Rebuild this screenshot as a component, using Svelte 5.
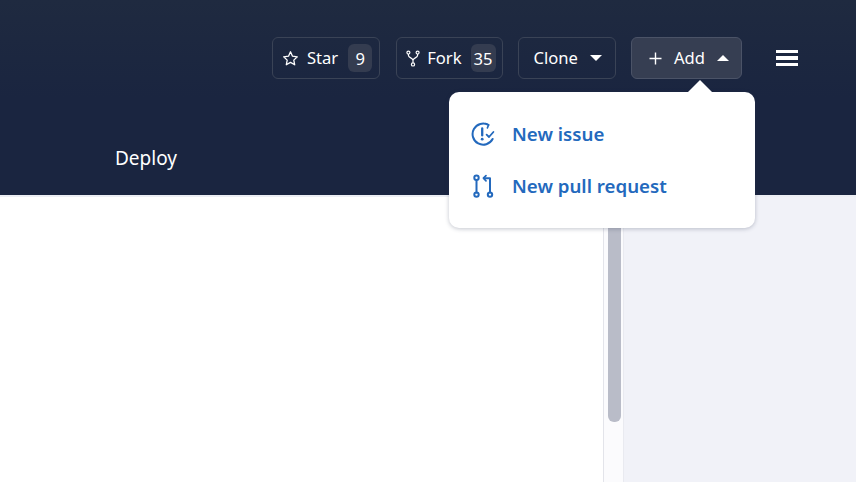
<script>
  const items = [
    { label: 'New issue', icon: 'issue' },
    { label: 'New pull request', icon: 'pull' }
  ];
</script>

<div class="page">
  <header class="top">
    <div class="toolbar">
      <button class="btn star">
        <svg class="ico" width="17" height="17" viewBox="0 0 17 17" fill="none" stroke="currentColor" stroke-width="1.3" stroke-linejoin="round">
          <path d="M8.5 1.8l2 4.4 4.8.6-3.5 3.3.9 4.7-4.2-2.4-4.2 2.4.9-4.7-3.5-3.3 4.8-.6z" />
        </svg>
        <span class="label">Star</span>
        <span class="count">9</span>
      </button>
      <button class="btn fork">
        <svg class="ico" width="14" height="17" viewBox="0 0 14 17" fill="none" stroke="currentColor" stroke-width="1.2">
          <circle cx="2.4" cy="2.6" r="1.5" />
          <circle cx="11.6" cy="2.6" r="1.5" />
          <circle cx="7" cy="14.4" r="1.6" />
          <path d="M2.4 4.1v1.2c0 2.8 4.6 2.4 4.6 5.2v2.3M11.6 4.1v1.2c0 2.8-4.6 2.4-4.6 5.2" />
        </svg>
        <span class="label">Fork</span>
        <span class="count">35</span>
      </button>
      <button class="btn clone">
        <span class="label">Clone</span>
        <span class="caret down"></span>
      </button>
      <button class="btn add">
        <svg width="13" height="13" viewBox="0 0 13 13" stroke="currentColor" stroke-width="1.4">
          <path d="M6.5 0.5v12M0.5 6.5h12" />
        </svg>
        <span class="label">Add</span>
        <span class="caret up"></span>
      </button>
      <div class="burger"><i></i><i></i><i></i></div>
    </div>
    <nav class="tabs"><span>Deploy</span></nav>

    <div class="menu">
      <span class="arrow"></span>
      {#each items as item}
        <div class="item">
          {#if item.icon === 'issue'}
            <svg width="24" height="24" viewBox="0 0 24 24" fill="none" stroke="currentColor" stroke-width="2" stroke-linecap="round" stroke-linejoin="round">
              <path d="M17.4 2.9A10.6 10.6 0 1 0 21.6 17" />
              <path d="M14.6 1.6l3 1.3-1.2 3" stroke-width="1.6" />
              <path d="M11.2 6.4v7" stroke-width="2.3" />
              <circle cx="11.2" cy="17.2" r="1.4" fill="currentColor" stroke="none" />
              <path d="M15.6 12.6l2.4 2.4 4.4-5" stroke-width="1.8" />
            </svg>
          {:else}
            <svg width="24" height="24" viewBox="0 0 24 24" fill="none" stroke="currentColor" stroke-width="2" stroke-linecap="round" stroke-linejoin="round">
              <circle cx="5.5" cy="3.8" r="2.2" />
              <circle cx="5.5" cy="20.6" r="2.2" />
              <circle cx="19" cy="20.6" r="2.2" />
              <path d="M5.5 6v12.4M19 18.4V4.2h-6" />
              <path d="M15 1.6l-2.6 2.6 2.6 2.6" stroke-width="1.7" />
            </svg>
          {/if}
          <span class="label">{item.label}</span>
        </div>
      {/each}
    </div>
  </header>

  <main class="body">
    <div class="content"></div>
    <div class="track"><div class="thumb"></div></div>
    <aside class="side"></aside>
  </main>
</div>

<style>
  :global(body) {
    margin: 0;
    overflow: hidden;
  }

  .page {
    width: 856px;
    height: 482px;
    display: flex;
    flex-direction: column;
    font-family: "Noto Sans", sans-serif;
    overflow: hidden;
  }

  .top {
    position: relative;
    height: 195px;
    flex: none;
    box-sizing: border-box;
    padding: 37px 58px 0 115px;
    background: linear-gradient(#1f2a40, #1a2540 50%);
    color: #fff;
  }

  .toolbar {
    display: flex;
    justify-content: flex-end;
    align-items: center;
    gap: 15px;
  }

  .btn {
    height: 42px;
    box-sizing: border-box;
    display: flex;
    align-items: center;
    gap: 8px;
    padding: 0 8px 0 9px;
    background: transparent;
    border: 1.5px solid #3a4356;
    border-radius: 6px;
    color: #fff;
    font: inherit;
    font-size: 16.6px;
  }

  .label {
    padding-bottom: 2px;
  }

  .star {
    margin-right: 1px;
    padding-right: 7px;
  }

  .star .count {
    margin-left: 2px;
  }

  .ico {
    flex: none;
  }

  .count {
    min-width: 24px;
    height: 28px;
    box-sizing: border-box;
    display: flex;
    align-items: center;
    justify-content: center;
    background: #343c50;
    border-radius: 6px;
  }

  .fork {
    gap: 7px;
    padding-right: 6px;
  }

  .fork .count {
    min-width: 25px;
    margin-left: 2px;
  }

  .clone {
    padding: 0 13px 0 15px;
    gap: 12px;
  }

  .add {
    padding: 0 12px 0 17px;
    gap: 12px;
    background: #363e52;
    border-color: #4b5367;
  }

  .caret {
    width: 0;
    height: 0;
    border-left: 6px solid transparent;
    border-right: 6px solid transparent;
  }

  .caret.down {
    border-top: 6px solid #fff;
  }

  .caret.up {
    border-bottom: 6px solid #fff;
  }

  .burger {
    margin-left: 19px;
    width: 22px;
    display: flex;
    flex-direction: column;
    gap: 3px;
  }

  .burger i {
    display: block;
    height: 3.5px;
    background: #fff;
  }

  .tabs {
    margin-top: 66px;
    font-size: 19px;
    line-height: 26px;
  }

  .menu {
    position: absolute;
    left: 449px;
    top: 92px;
    width: 306px;
    height: 136px;
    box-sizing: border-box;
    padding: 16px 22px;
    background: #fff;
    border-radius: 10px;
    box-shadow: 0 1px 4px rgba(40, 50, 80, 0.28);
    display: flex;
    flex-direction: column;
    color: #2369bd;
    font-size: 18.7px;
    font-weight: 600;
    z-index: 2;
  }

  .arrow {
    position: absolute;
    left: 239px;
    top: -12px;
    width: 0;
    height: 0;
    border-left: 12px solid transparent;
    border-right: 12px solid transparent;
    border-bottom: 12px solid #fff;
  }

  .item {
    height: 52px;
    display: flex;
    align-items: center;
    gap: 17px;
  }

  .body {
    flex: 1;
    display: flex;
    border-top: 2px solid #eceef4;
  }

  .content {
    width: 603px;
    background: #fff;
  }

  .track {
    width: 21px;
    box-sizing: border-box;
    background: #fbfbfd;
    border-left: 1px solid #e3e4ea;
    border-right: 1px solid #e9eaf0;
    padding: 0 2px 0 4px;
  }

  .thumb {
    height: 225px;
    background: #b9bcc8;
    border-radius: 0 0 6px 6px;
  }

  .side {
    flex: 1;
    background: #f1f2f8;
  }
</style>
